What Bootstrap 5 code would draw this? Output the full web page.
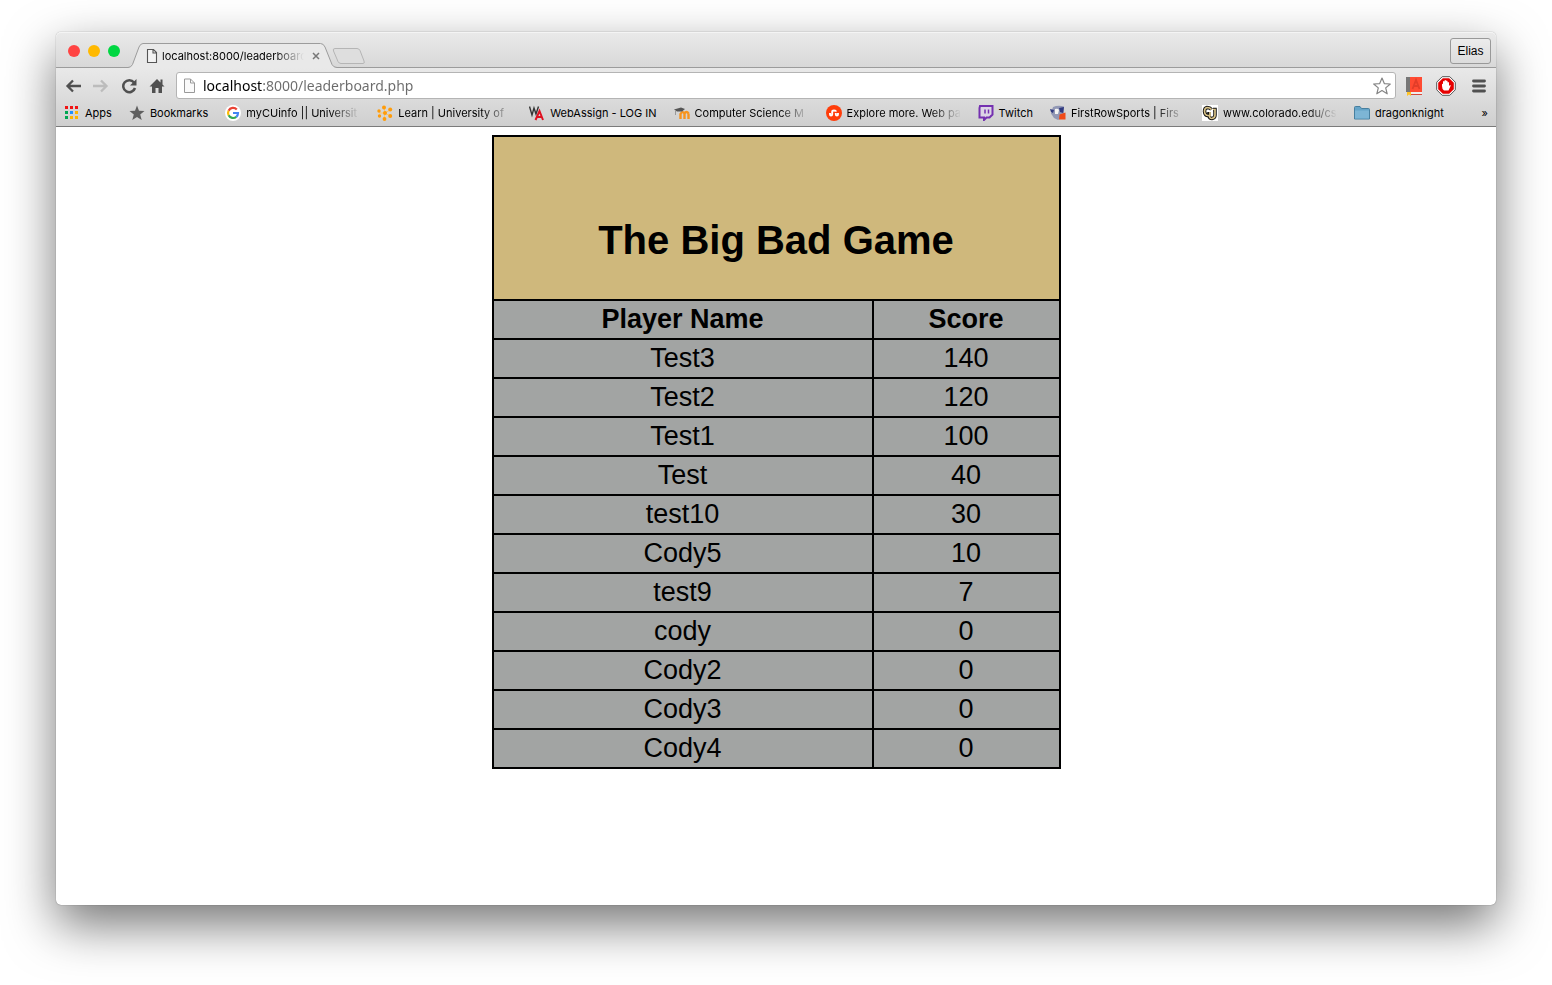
<!DOCTYPE html>
<html lang="en">
<head>
<meta charset="utf-8">
<meta name="viewport" content="width=device-width, initial-scale=1">
<title>Leaderboard</title>
<link rel="stylesheet" href="https://cdn.jsdelivr.net/npm/bootstrap@5.3.0/dist/css/bootstrap.min.css">
<style>
  body { font-family: Inter, "Liberation Sans", sans-serif; font-size: 11px; line-height: 16px; color: #000; background: #fff; padding: 32px 56px 80px; }
  svg { flex: none; display: block; }
  .browser { min-height: calc(100vh - 112px); background: #fff; border-radius: 5px; box-shadow: 0 0 1px rgba(0,0,0,.6), 0 20px 50px rgba(0,0,0,.54); }
  .titlebar { height: 36px; padding: 0 5px 0 12px; border-radius: 5px 5px 0 0; border-bottom: 1px solid #9c9c9c; background: linear-gradient(#eaeaea, #d8d8d8); box-shadow: inset 0 1px #f4f4f4; }
  .dots { gap: 8px; padding-top: 13px; }
  .light { width: 12px; height: 12px; border-radius: 50%; border: 0; padding: 0; }
  .red { background: #ff4443; } .amber { background: #ffb900; } .green { background: #00d742; }
  .tab { width: 210px; height: 25px; margin: 11px 0 -1px 8px; padding: 0 18px; }
  .tab .shape { position: absolute; left: 0; top: 0; }
  .tab > *:not(.shape) { position: relative; }
  .fade-text { overflow: hidden; white-space: nowrap; -webkit-mask-image: linear-gradient(to right, #000 calc(100% - 30px), transparent); mask-image: linear-gradient(to right, #000 calc(100% - 30px), transparent); }
  .plain { border: 0; padding: 0; background: none; color: inherit; }
  .newtab { margin: 16px 0 0 -6px; }
  .user { height: 26px; width: 41px; margin-top: 6px; font: 12px/16px "Liberation Sans", Arial, sans-serif; border: 1px solid #999; border-radius: 3px; padding: 0; background: linear-gradient(#ececec, #dcdcdc); color: #000; }
  .chrome { background: linear-gradient(#e9e9e9, #cfcfcf); border-bottom: 1px solid #7b7b7b; }
  .toolbar { padding: 4px 10px 0 9px; height: 31px; gap: 12px; }
  .omnibox { height: 27px; border: 1px solid #b4b4b4; border-radius: 3px; background: #fff; padding: 0 4px 0 5px; gap: 5px; margin: 0 -2px 0 -1px; }
  .url { border: 0; outline: 0; padding: 0; min-width: 0; height: 24px; font-family: "Noto Sans", sans-serif; font-size: 14px; background: linear-gradient(to right, #000 60px, #6b6b6b 60px); -webkit-background-clip: text; background-clip: text; -webkit-text-fill-color: transparent; }
  .book { margin-right: 2px; }
  .bookmarks { height: 27px; padding: 1px 8px 0 8px; }
  .bookmarks a { color: #000; gap: 5px; margin-right: 17px; text-decoration: none; white-space: nowrap; }
  .bookmarks a.long { width: 135px; }
  .bookmarks .fade-text { flex: 1; }
  .page { font-family: "Liberation Sans", Arial, sans-serif; font-size: 27px; line-height: 31px; padding: 8px; }
  .scores { width: 569px; border-collapse: collapse; table-layout: fixed; text-align: center; background: #a2a4a3; }
  .scores th, .scores td { border: 2px solid #000; padding: 3px; text-align: center; height: 39px; }
  .scores .banner { background: #cfb87c; height: 164px; padding-top: 46px; }
  .scores h1 { font-size: 40px; line-height: 46px; font-weight: 700; margin: 0; }
  .score-col { width: 187px; }
</style>
</head>
<body>
<div class="browser d-flex flex-column">
  <header>
    <div class="titlebar d-flex align-items-start">
      <div class="dots d-flex">
        <button class="light red" aria-label="Close"></button>
        <button class="light amber" aria-label="Minimise"></button>
        <button class="light green" aria-label="Zoom"></button>
      </div>
      <div class="tab d-flex align-items-center position-relative">
        <svg class="shape" width="210" height="25" viewBox="0 0 210 25"><path d="M0 25V24.5Q3 24.500 4.500 21.500L11 4Q12.500.500 15 .500H192.500Q195.500.500 197 4L204 21.500Q205.500 24.500 209 24.500V25Z" fill="#e9e9e9"/><path d="M0 24.500Q3 24.500 4.500 21.500L11 4Q12.500.500 15 .500H192.500Q195.500.500 197 4L204 21.500Q205.500 24.500 209 24.500" fill="none" stroke="#9c9c9c"/></svg>
        <svg width="12" height="16" viewBox="0 0 12 16"><path d="M1.500 1.500H7.500L10.500 4.500V14.500H1.500ZM7 1.500V5H10.500" fill="#f3f3f3" stroke="#555" stroke-width="1.100"/></svg>
        <span class="fade-text flex-grow-1 ms-1">localhost:8000/leaderboard</span>
        <button class="plain ms-2" aria-label="Close tab"><svg width="8" height="8" viewBox="0 0 8 8"><path d="M1 1L7 7M7 1L1 7" stroke="#777" stroke-width="1.500"/></svg></button>
      </div>
      <button class="plain newtab" aria-label="New tab"><svg width="34" height="17" viewBox="0 0 34 17"><path d="M3 .500H25Q27 .500 28 2.500L32 13Q33 15.500 31 15.500H9Q7 15.500 6 13.500L1.500 3Q.500 .500 3 .500Z" fill="#dedede" stroke="#b5b5b5"/></svg></button>
      <button class="user ms-auto">Elias</button>
    </div>
    <div class="chrome">
      <div class="toolbar d-flex align-items-center">
        <button class="plain" aria-label="Back"><svg width="16" height="16" viewBox="0 0 16 16"><path d="M8 2.500L2.500 8L8 13.500M3 8H16" fill="none" stroke="#505050" stroke-width="2.300"/></svg></button>
        <button class="plain" aria-label="Forward"><svg width="16" height="16" viewBox="0 0 16 16"><path d="M8 2.500L13.500 8L8 13.500M13 8H0" fill="none" stroke="#bcbcbc" stroke-width="2.300"/></svg></button>
        <button class="plain" aria-label="Reload"><svg width="16" height="16" viewBox="0 0 16 16"><path d="M13 4.500A6 6 0 1 0 14 10" fill="none" stroke="#505050" stroke-width="2.500"/><path d="M15.500 1V7.500H9Z" fill="#505050"/></svg></button>
        <button class="plain" aria-label="Home"><svg width="16" height="16" viewBox="0 0 16 16"><path d="M8 1L.5 8.500H3V15H6.500V10H9.500V15H13V8.500H15.500L13.500 6.500V1.500H11.500V4.500Z" fill="#505050"/></svg></button>
        <div class="omnibox d-flex align-items-center flex-grow-1">
          <svg width="16" height="16" viewBox="0 0 16 16"><path d="M2.500 1H8.500L12.500 5V14.500H2.500ZM8.500 1V5H12.500" fill="#fafafa" stroke="#999"/></svg>
          <input class="url flex-grow-1" type="text" aria-label="Address" value="localhost:8000/leaderboard.php">
          <button class="plain" aria-label="Bookmark this page"><svg width="18" height="18" viewBox="0 0 18 18"><path d="M9 1L11.300 6.600L17.300 7L12.700 10.900L14.200 16.800L9 13.600L3.800 16.800L5.300 10.900L.7 7L6.700 6.600Z" fill="#fff" stroke="#858585" stroke-width="1.200" stroke-linejoin="round"/></svg></button>
        </div>
        <button class="plain book" aria-label="Dictionary extension"><svg width="16" height="20" viewBox="0 0 16 20"><path d="M0 1H4V16H0Z" fill="#777"/><path d="M4 1H16V16H4Z" fill="#ff4b32"/><path d="M6.500 13L10 4L13.500 13M7.500 10H12.500" fill="none" stroke="#e23d29" stroke-width="1.800"/><path d="M1 16H16V18H1Z" fill="#eee"/><path d="M4 18H16V19H4Z" fill="#d64a3a"/><path d="M1 16H5V20L3 18.500L1 20Z" fill="#ffc324"/></svg></button>
        <button class="plain" aria-label="Ad blocker"><svg width="20" height="20" viewBox="0 0 20 20"><path d="M6.200.700H13.800L19.300 6.200V13.800L13.800 19.300H6.200L.7 13.800V6.200Z" fill="#fff" stroke="#555"/><path d="M6.800 2.200H13.200L17.800 6.800V13.200L13.200 17.800H6.800L2.200 13.200V6.800Z" fill="#e60000"/><path d="M6 8.500Q6 7.500 7 8V5.500Q7.800 4.500 8.500 5.500V4.500Q9.300 3.500 10 4.500V5Q11 4 11.600 5.500V6.500Q12.700 5.500 13 7V10L14 9Q15 9 14.600 10L12.500 14.500H8Q6 13 6 10Z" fill="#fff"/></svg></button>
        <button class="plain ms-1" aria-label="Menu"><svg width="14" height="14" viewBox="0 0 14 14"><path d="M1.500 2H12.500M1.500 7H12.500M1.500 12H12.500" stroke="#505050" stroke-width="2.800" stroke-linecap="round"/></svg></button>
      </div>
      <nav class="bookmarks d-flex align-items-center" aria-label="Bookmarks">
        <a class="d-flex align-items-center" href="#"><svg width="16" height="16" viewBox="0 0 16 16"><path d="M1 1H4V4H1ZM6 1H9V4H6ZM11 1H14V4H11Z" fill="#f01414"/><path d="M1 6H4V9H1Z" fill="#00a651"/><path d="M6 6H9V9H6Z" fill="#1e90ff"/><path d="M11 6H14V9H11ZM6 11H9V14H6ZM11 11H14V14H11Z" fill="#ffb400"/><path d="M1 11H4V14H1Z" fill="#00a651"/></svg><span>Apps</span></a>
        <a class="d-flex align-items-center" href="#"><svg width="16" height="16" viewBox="0 0 16 16"><path d="M8 .500L10 5.700L15.500 6L11.200 9.500L12.700 15L8 12L3.300 15L4.800 9.500L.5 6L6 5.700Z" fill="#5f5f5f"/></svg><span>Bookmarks</span></a>
        <a class="long d-flex align-items-center" href="#"><svg width="16" height="16" viewBox="0 0 16 16"><circle cx="8" cy="8" r="8" fill="#fff"/><g fill="none" stroke-width="2.200"><path d="M11.800 4.500A5 5 0 0 0 3.600 5.700" stroke="#ea4335"/><path d="M3.600 5.700A5 5 0 0 0 3.600 10.300" stroke="#fbbc05"/><path d="M3.600 10.300A5 5 0 0 0 11.300 11.800" stroke="#34a853"/><path d="M11.300 11.800A5 5 0 0 0 13 8H8" stroke="#4285f4"/></g></svg><span class="fade-text">myCUinfo || Universit</span></a>
        <a class="long d-flex align-items-center" href="#"><svg width="16" height="16" viewBox="0 0 16 16"><path d="M8 8L7 2M8 8L13 5M8 8L13 11M8 8L7 14M8 8L2 8" stroke="#ffc567"/><g fill="#ff9c0a"><circle cx="8" cy="8" r="2"/><circle cx="7" cy="2.500" r="2"/><circle cx="13.200" cy="4.500" r="2"/><circle cx="13.200" cy="11" r="2"/><circle cx="7.500" cy="14" r="1.900"/><circle cx="2.500" cy="11" r="1.700"/><circle cx="2" cy="6" r="1.700"/></g></svg><span class="fade-text">Learn | University of</span></a>
        <a class="d-flex align-items-center" href="#"><svg width="16" height="16" viewBox="0 0 16 16"><path d="M.5 1.500L3 10L5 3L7 9L9.500 1.500" fill="none" stroke="#333" stroke-width="1.400"/><path d="M6.500 15L10.500 6L14 15M8 12H13" fill="none" stroke="#df1020" stroke-width="2"/></svg><span>WebAssign - LOG IN</span></a>
        <a class="long d-flex align-items-center" href="#"><svg width="16" height="16" viewBox="0 0 16 16"><path d="M6.500 14V8.500M10.500 14V8.500M14.500 14V8.500M6.500 9Q8.500 5.500 10.500 8.500Q12.500 5.500 14.500 8.500" fill="none" stroke="#f7941d" stroke-width="2.400"/><path d="M0 4.500L7 2.500L11 4L8 6.500L3 6.500Z" fill="#555"/><path d="M1.500 5V10" stroke="#999"/></svg><span class="fade-text">Computer Science M</span></a>
        <a class="long d-flex align-items-center" href="#"><svg width="16" height="16" viewBox="0 0 16 16"><circle cx="8" cy="8" r="8" fill="#ff3d0a"/><path d="M4 8V9.200Q4 10.500 5 10.500Q6.200 10.500 6.200 9.200V6.800Q6.200 5.500 8 5.500Q9.800 5.500 9.800 6.800M9.800 8V9.200Q9.800 10.500 11 10.500Q12 10.500 12 9.200V8" fill="none" stroke="#fff" stroke-width="1.900"/></svg><span class="fade-text">Explore more. Web pa</span></a>
        <a class="d-flex align-items-center" href="#"><svg width="16" height="16" viewBox="0 0 16 16"><path d="M2 1H14.500V9.500L11.500 12.500H8.500L6 15V12.500H1.500V3Z" fill="#dcd4e5" stroke="#7430b0" stroke-width="2"/><path d="M7 4.500V8.500M10.500 4.500V8.500" stroke="#7430b0" stroke-width="1.500"/></svg><span>Twitch</span></a>
        <a class="long d-flex align-items-center" href="#"><svg width="16" height="16" viewBox="0 0 16 16"><path d="M3 2Q8 0 14 1.500L14 12L8 15L4 13L1 8.500Z" fill="#9298b5"/><path d="M0 4L4 5L3 8L1 7ZM9 3L14 2L13 8L10 7Z" fill="#303a80"/><path d="M5 4Q8 3 9 5L8 9L5 9Z" fill="#f4f4f4"/><path d="M9.500 9.500L15.500 7.500V14.500H9Z" fill="#f04b18"/></svg><span class="fade-text">FirstRowSports | Firs</span></a>
        <a class="long d-flex align-items-center" href="#"><svg width="16" height="16" viewBox="0 0 16 16"><path d="M0 0H16V16H0Z" fill="#fff"/><g fill="none"><path d="M9.500 4.500Q8 2.500 5 2.500Q2.500 3 2.500 6.500Q3 10.500 6 10.500H8" stroke="#111" stroke-width="3.500"/><path d="M7 7V11Q7.500 13.500 10 13.500Q13 13 13 10V4.500H11" stroke="#111" stroke-width="3.500"/><path d="M9.500 4.500Q8 2.500 5 2.500Q2.500 3 2.500 6.500Q3 10.500 6 10.500H8V7M7.500 10Q7 13.500 10 13.500Q13 13 13 10V4.500H11" stroke="#d9c388" stroke-width="1.700"/></g></svg><span class="fade-text">www.colorado.edu/cs</span></a>
        <a class="d-flex align-items-center" href="#"><svg width="16" height="16" viewBox="0 0 16 16"><path d="M.5 14V2.500Q.5 1.500 1.500 1.500H6L7.500 3.500H14.500Q15.500 3.500 15.500 4.500V14Z" fill="#65a4c8" stroke="#477f9f"/><path d="M1 5.500H15V13.500H1Z" fill="#7db5d5"/></svg><span>dragonknight</span></a>
        <button class="plain ms-auto" aria-label="More bookmarks">»</button>
      </nav>
    </div>
  </header>
  <main class="page">
    <table class="scores mx-auto">
      <colgroup><col><col class="score-col"></colgroup>
      <thead>
        <tr><th class="banner" colspan="2"><h1>The Big Bad Game</h1></th></tr>
        <tr><th>Player Name</th><th>Score</th></tr>
      </thead>
      <tbody>
        <tr><td>Test3</td><td>140</td></tr>
        <tr><td>Test2</td><td>120</td></tr>
        <tr><td>Test1</td><td>100</td></tr>
        <tr><td>Test</td><td>40</td></tr>
        <tr><td>test10</td><td>30</td></tr>
        <tr><td>Cody5</td><td>10</td></tr>
        <tr><td>test9</td><td>7</td></tr>
        <tr><td>cody</td><td>0</td></tr>
        <tr><td>Cody2</td><td>0</td></tr>
        <tr><td>Cody3</td><td>0</td></tr>
        <tr><td>Cody4</td><td>0</td></tr>
      </tbody>
    </table>
  </main>
</div>
<script src="https://cdn.jsdelivr.net/npm/bootstrap@5.3.0/dist/js/bootstrap.bundle.min.js"></script>
</body>
</html>
